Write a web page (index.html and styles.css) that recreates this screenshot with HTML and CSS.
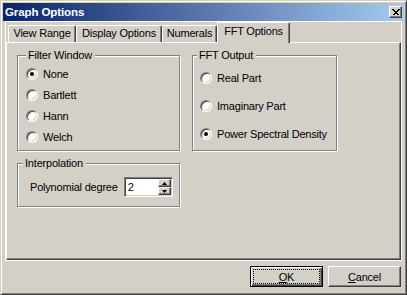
FILE: index.html
```html
<!DOCTYPE html>
<html lang="en">
<head>
  <meta charset="UTF-8" />
  <title>Graph Options</title>
  <link rel="stylesheet" href="styles.css">
</head>
<body>

  <div class="window">
    <!-- Title bar -->
    <div class="titlebar">
      <span class="title">Graph Options</span>
      <span class="close-btn">
        <svg width="8" height="7" viewBox="0 0 8 7"><path d="M0.5 0.5 L6.5 6.5 M1.5 0.5 L7.5 6.5 M6.5 0.5 L0.5 6.5 M7.5 0.5 L1.5 6.5" stroke="#000" stroke-width="1" fill="none" shape-rendering="crispEdges"/></svg>
      </span>
    </div>

    <div class="client">
      <div class="frame">
        <!-- Tabs -->
        <div class="tabs">
          <div class="tab tab-view">View Range</div>
          <div class="tab tab-display">Display Options</div>
          <div class="tab tab-numerals">Numerals</div>
          <div class="tab tab-fft active">FFT Options</div>
        </div>

        <!-- FFT Options page -->
        <div class="panel">
          <div class="left-col">
            <div class="group group-filter">
              <span class="group-label">Filter Window</span>
              <div class="options">
                <label class="option"><span class="radio checked"></span>None</label>
                <label class="option"><span class="radio"></span>Bartlett</label>
                <label class="option"><span class="radio"></span>Hann</label>
                <label class="option"><span class="radio"></span>Welch</label>
              </div>
            </div>

            <div class="group group-interp">
              <span class="group-label">Interpolation</span>
              <div class="interp-row">
                <span>Polynomial degree</span>
                <div class="spin">
                  <span class="spin-value">2</span>
                  <div class="spin-btns">
                    <span class="spin-btn"><svg width="5" height="3" viewBox="0 0 5 3"><path d="M2.5 0 L5 3 L0 3 Z" fill="#000"/></svg></span>
                    <span class="spin-btn"><svg width="5" height="3" viewBox="0 0 5 3"><path d="M0 0 L5 0 L2.5 3 Z" fill="#000"/></svg></span>
                  </div>
                </div>
              </div>
            </div>
          </div>

          <div class="group group-output">
            <span class="group-label">FFT Output</span>
            <div class="options">
              <label class="option"><span class="radio"></span>Real Part</label>
              <label class="option"><span class="radio"></span>Imaginary Part</label>
              <label class="option"><span class="radio checked"></span>Power Spectral Density</label>
            </div>
          </div>
        </div>
      </div>

      <!-- Buttons -->
      <div class="actions">
        <button class="btn btn-default"><u>O</u>K</button>
        <button class="btn"><u>C</u>ancel</button>
      </div>
    </div>
  </div>

</body>
</html>
```

FILE: styles.css
```css
:root {
  --face: #d4d0c8;
  --shadow: #808080;
  --dark: #404040;
  --light: #ffffff;
}

* {
  box-sizing: border-box;
}

body {
  margin: 0;
  background: var(--face);
  font-family: "Liberation Sans", Arial, sans-serif;
  font-size: 11px;
  letter-spacing: -0.2px;
  color: #000;
}

.window {
  width: 407px;
  height: 295px;
  display: flex;
  flex-direction: column;
  padding: 2px;
  background: var(--face);
  border: 1px solid;
  border-color: var(--face) var(--dark) var(--dark) var(--face);
  box-shadow: inset 1px 1px var(--light), inset -1px -1px var(--shadow);
}

.titlebar {
  height: 18px;
  display: flex;
  align-items: center;
  justify-content: space-between;
  padding: 0 2px 0 2px;
  background: linear-gradient(to right, #0a246a, #a6caf0);
  color: #fff;
}

.title {
  font-weight: bold;
  font-size: 11.5px;
  letter-spacing: -0.1px;
}

.close-btn {
  width: 13px;
  height: 12px;
  display: flex;
  align-items: center;
  justify-content: center;
  background: var(--face);
  border: 1px solid;
  border-color: var(--light) var(--dark) var(--dark) var(--light);
  box-shadow: inset -1px -1px var(--shadow);
}

.client {
  flex: 1;
  display: flex;
  flex-direction: column;
}

.frame {
  height: 240px;
  margin: 0 2px;
  display: flex;
  flex-direction: column;
  border: 1px solid var(--light);
}

/* tabs */

.tabs {
  height: 20px;
  display: flex;
  align-items: flex-end;
  padding-left: 2px;
}

.tab {
  height: 17px;
  line-height: 15px;
  text-align: center;
  background: var(--face);
  border-top: 1px solid var(--light);
  border-left: 1px solid var(--light);
  border-right: 1px solid var(--dark);
  border-top-left-radius: 2px;
  border-top-right-radius: 2px;
  box-shadow: inset -1px 0 var(--shadow);
}

.tab-view { width: 68px; }
.tab-display { width: 86px; }
.tab-numerals { width: 55px; }
.tab-fft { width: 73px; }

.tab.active {
  position: relative;
  z-index: 1;
  height: 21px;
  line-height: 17px;
  margin-bottom: -1px;
}

.panel {
  flex: 1;
  display: flex;
  align-items: flex-start;
  gap: 12px;
  padding: 12px 0 0 10px;
  border-top: 1px solid var(--light);
  border-left: 1px solid var(--light);
  border-right: 1px solid var(--dark);
  border-bottom: 1px solid var(--dark);
  box-shadow: inset -1px -1px var(--shadow);
}

.left-col {
  display: flex;
  flex-direction: column;
  gap: 12px;
}

/* group boxes */

.group {
  position: relative;
  border: 1px solid var(--shadow);
  box-shadow: 1px 1px var(--light), inset 1px 1px var(--light);
}

.group-label {
  position: absolute;
  top: -7px;
  padding: 0 3px 0 2px;
  line-height: 13px;
  background: var(--face);
}

.group-filter {
  width: 163px;
  height: 96px;
}

.group-filter .group-label { left: 8px; }

.group-output {
  width: 145px;
  height: 96px;
}

.group-output .group-label { left: 4px; }

.group-interp {
  width: 163px;
  height: 44px;
}

.group-interp .group-label { left: 5px; }

.options {
  display: flex;
  flex-direction: column;
}

.group-filter .options {
  padding: 7px 0 0 8px;
}

.group-filter .option {
  height: 21px;
}

.group-output .options {
  padding: 8px 0 0 7px;
}

.group-output .option {
  height: 28px;
}

.option {
  display: flex;
  align-items: center;
  gap: 5px;
}

.radio {
  position: relative;
  width: 12px;
  height: 12px;
  border-radius: 50%;
  background: #fff;
  border: 1px solid;
  border-color: var(--shadow) var(--light) var(--light) var(--shadow);
  box-shadow: inset 1px 1px var(--dark), inset -1px -1px var(--face);
}

.radio.checked::after {
  content: "";
  position: absolute;
  left: 3px;
  top: 3px;
  width: 4px;
  height: 4px;
  border-radius: 50%;
  background: #000;
}

/* spin box */

.interp-row {
  display: flex;
  align-items: center;
  gap: 6px;
  padding: 13px 0 0 12px;
}

.spin {
  width: 49px;
  height: 20px;
  display: flex;
  background: #fff;
  border: 1px solid;
  border-color: var(--shadow) var(--light) var(--light) var(--shadow);
  box-shadow: inset 1px 1px var(--dark), inset -1px -1px var(--face);
  padding: 1px;
}

.spin-value {
  flex: 1;
  line-height: 16px;
  padding-left: 2px;
}

.spin-btns {
  width: 13px;
  display: flex;
  flex-direction: column;
}

.spin-btn {
  flex: 1;
  display: flex;
  align-items: center;
  justify-content: center;
  background: var(--face);
  border: 1px solid;
  border-color: var(--light) var(--dark) var(--dark) var(--light);
  box-shadow: inset -1px -1px var(--shadow);
}

/* bottom buttons */

.actions {
  display: flex;
  justify-content: flex-end;
  gap: 5px;
  padding: 5px 3px 0 0;
}

.btn {
  width: 73px;
  height: 21px;
  padding: 0;
  font-family: inherit;
  font-size: 11px;
  letter-spacing: inherit;
  color: #000;
  background: var(--face);
  border: 1px solid;
  border-color: var(--light) var(--dark) var(--dark) var(--light);
  box-shadow: inset -1px -1px var(--shadow);
}

.btn-default {
  border: 1px solid #000;
  box-shadow: inset 1px 1px var(--light), inset -1px -1px var(--dark), inset -2px -2px var(--shadow);
  outline: 1px dotted #000;
  outline-offset: -4px;
}
```
